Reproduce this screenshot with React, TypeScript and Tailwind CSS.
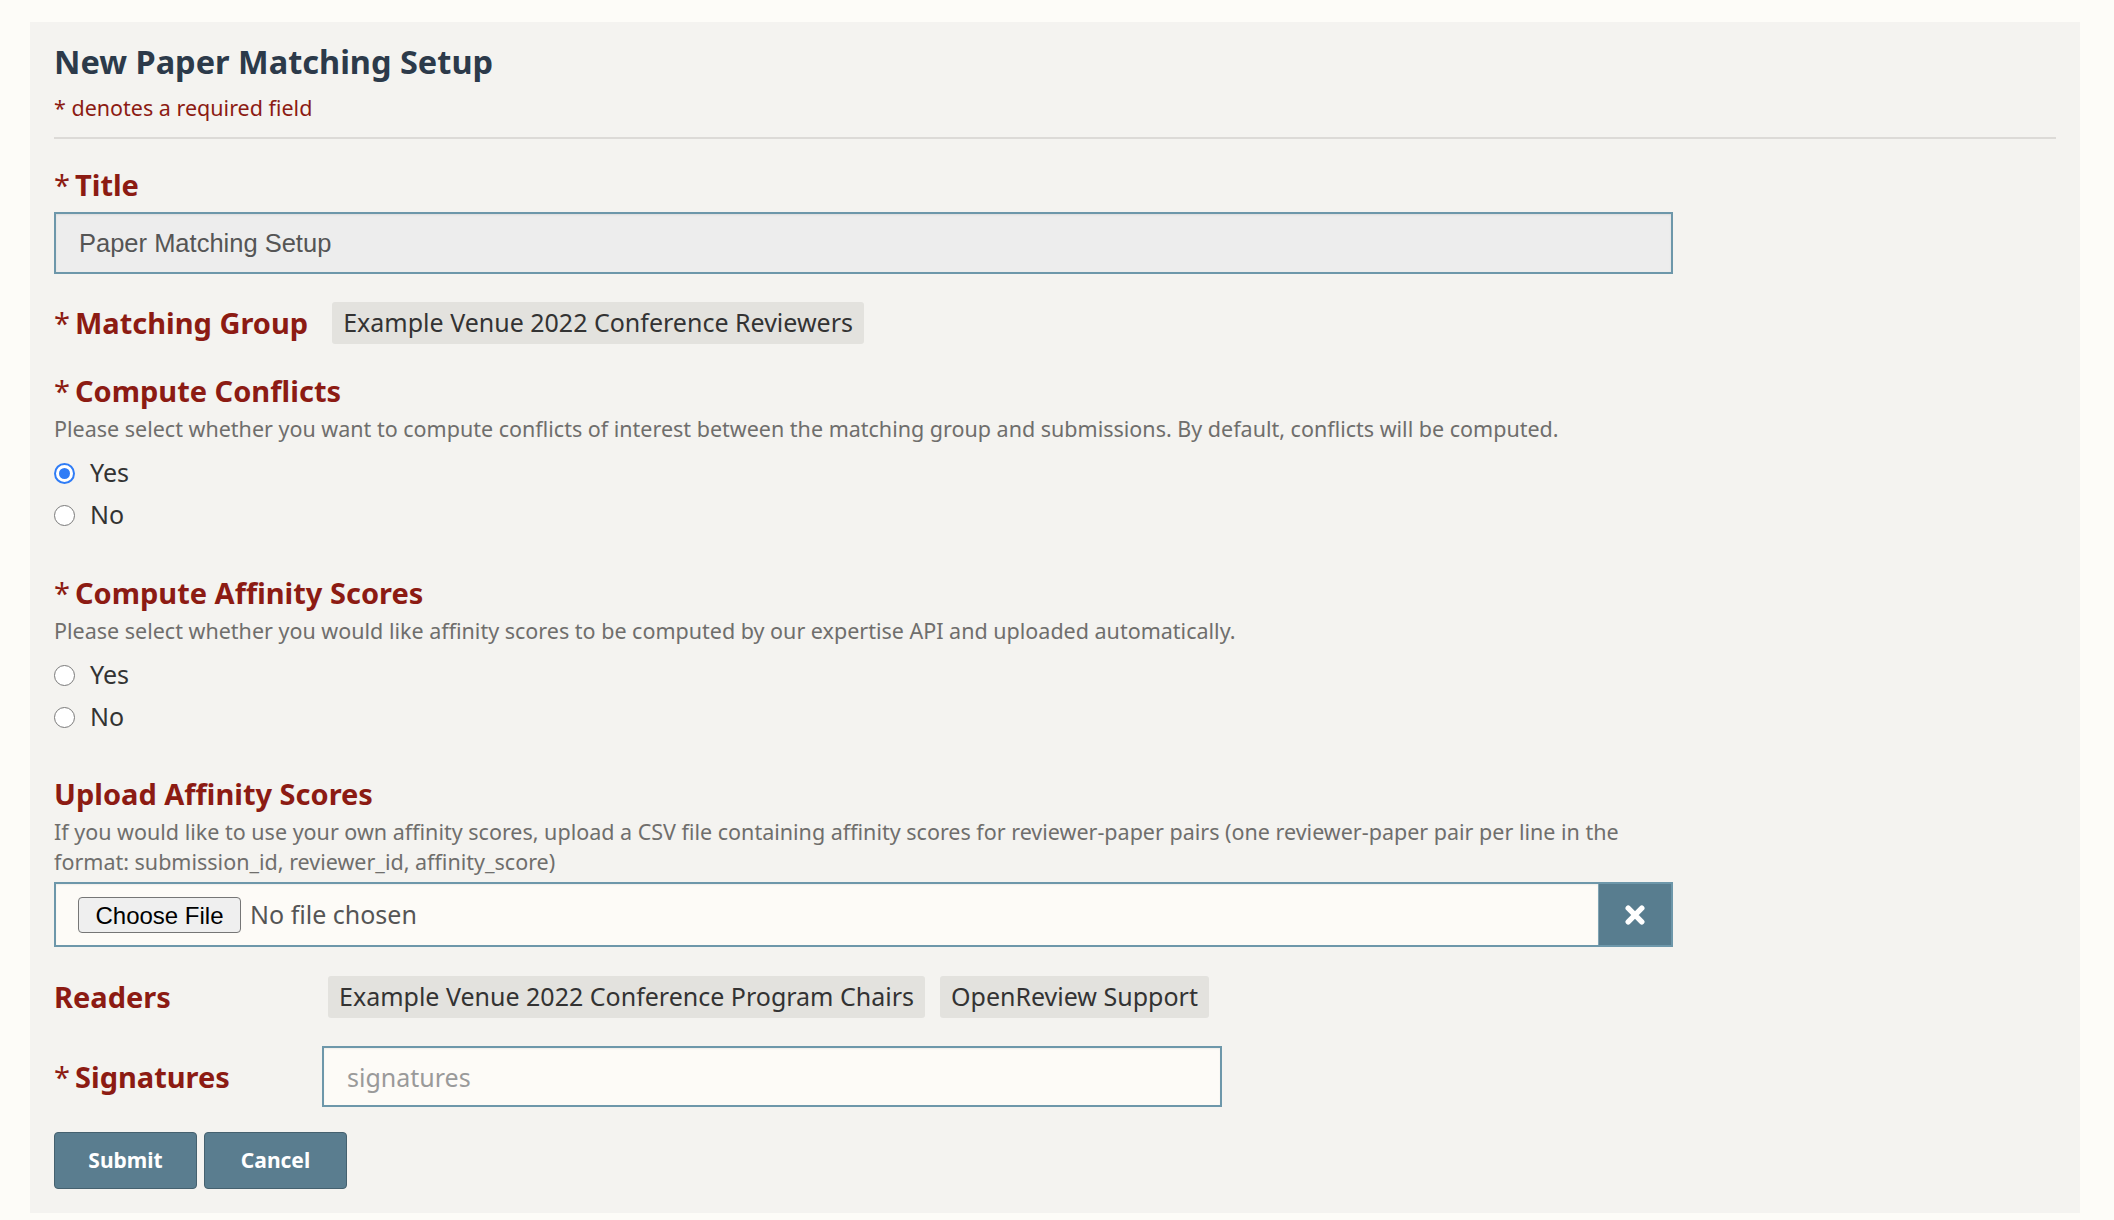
import React from 'react';

const labelCls = 'text-[29px] leading-[36px] font-bold text-[#8c1b13]';
const descCls = 'mt-[5px] text-[21.5px] leading-[30px] text-[#6f6e6c]';
const chipCls = 'h-[42px] px-[11px] flex items-center bg-[#e3e2de] rounded-[3px] text-[25px] text-[#333]';

const Req = () => <span className="font-normal mr-[5px]">*</span>;

const Radio = ({ label, checked }: { label: string; checked?: boolean }) => (
  <label className="h-[42px] flex items-center gap-[15px] text-[25px] text-[#333]">
    {checked ? (
      <span className="w-[21px] h-[21px] rounded-full border-[2px] border-[#2f7cf6] bg-white flex items-center justify-center">
        <span className="w-[11px] h-[11px] rounded-full bg-[#2f7cf6]" />
      </span>
    ) : (
      <span className="w-[21px] h-[21px] rounded-full border-[1.5px] border-[#7a7a7a] bg-white" />
    )}
    <span>{label}</span>
  </label>
);

export default function App() {
  return (
    <div className="min-h-screen bg-[#fdfcf8] pl-[30px] pr-[34px] pt-[22px] pb-[7px] font-['Noto_Sans',sans-serif]">
      <div className="bg-[#f4f3f0] px-6 pt-5 pb-6">
        {/* Header */}
        <h1 className="text-[32.5px] leading-[40px] font-bold text-[#2c3a4a]">New Paper Matching Setup</h1>
        <p className="mt-3 text-[21.5px] leading-[28px] text-[#8c1b13]">* denotes a required field</p>
        <hr className="mt-[15px] border-0 border-t-2 border-[#dcdad7]" />

        {/* Title */}
        <div className={`mt-[28px] ${labelCls}`}>
          <Req />Title
        </div>
        <input
          readOnly
          defaultValue="Paper Matching Setup"
          className="mt-[9px] block w-[1619px] h-[62px] border-2 border-[#6d97aa] bg-[#ededed] pl-[23px] text-[25.5px] text-[#555] font-['Liberation_Sans',Arial,sans-serif] outline-none shadow-[inset_0_1px_2px_rgba(0,0,0,0.08)]"
        />

        {/* Matching group */}
        <div className="mt-[28px] flex items-center gap-6">
          <div className={labelCls}>
            <Req />Matching Group
          </div>
          <span className={chipCls}>Example Venue 2022 Conference Reviewers</span>
        </div>

        {/* Compute conflicts */}
        <div className={`mt-[29px] ${labelCls}`}>
          <Req />Compute Conflicts
        </div>
        <p className={descCls}>
          Please select whether you want to compute conflicts of interest between the matching group and submissions. By default, conflicts will be computed.
        </p>
        <div className="mt-[8px]">
          <Radio label="Yes" checked />
          <Radio label="No" />
        </div>

        {/* Compute affinity */}
        <div className={`mt-[39px] ${labelCls}`}>
          <Req />Compute Affinity Scores
        </div>
        <p className={descCls}>
          Please select whether you would like affinity scores to be computed by our expertise API and uploaded automatically.
        </p>
        <div className="mt-[8px]">
          <Radio label="Yes" />
          <Radio label="No" />
        </div>

        {/* Upload affinity */}
        <div className={`mt-[38px] ${labelCls}`}>Upload Affinity Scores</div>
        <p className={`${descCls} w-[1640px] whitespace-nowrap`}>
          If you would like to use your own affinity scores, upload a CSV file containing affinity scores for reviewer-paper pairs (one reviewer-paper pair per line in the
          <br />
          format: submission_id, reviewer_id, affinity_score)
        </p>
        <div className="mt-[5px] w-[1619px] h-[65px] flex border-2 border-[#6d97aa]">
          <div className="flex-1 flex items-center pl-[22px] bg-[#fdfbf7] shadow-[inset_0_1px_2px_rgba(0,0,0,0.06)]">
            <button className="h-[36px] w-[163px] bg-[#efefef] border border-[#767676] rounded-[4px] text-[24px] text-black font-['Liberation_Sans',Arial,sans-serif]">
              Choose File
            </button>
            <span className="ml-[9px] text-[25px] text-[#555]">No file chosen</span>
          </div>
          <button className="w-[73px] bg-[#587d8f] border-l border-[#7fa3b3] flex items-center justify-center">
            <svg width="20" height="20" viewBox="0 0 20 20">
              <path d="M3.2 3.2 L16.8 16.8 M16.8 3.2 L3.2 16.8" stroke="#fff" strokeWidth="5.4" strokeLinecap="round" fill="none" />
            </svg>
          </button>
        </div>

        {/* Readers */}
        <div className="mt-[29px] flex items-center">
          <div className={`w-[274px] ${labelCls}`}>Readers</div>
          <div className="flex gap-[15px]">
            <span className={chipCls}>Example Venue 2022 Conference Program Chairs</span>
            <span className={chipCls}>OpenReview Support</span>
          </div>
        </div>

        {/* Signatures */}
        <div className="mt-[28px] flex items-center">
          <div className={`w-[268px] ${labelCls}`}>
            <Req />Signatures
          </div>
          <input
            placeholder="signatures"
            className="w-[900px] h-[61px] border-2 border-[#6d97aa] bg-[#fdfbf7] pl-[23px] text-[25px] text-[#333] placeholder:text-[#9a9a9a] outline-none shadow-[inset_0_1px_2px_rgba(0,0,0,0.06)]"
          />
        </div>

        {/* Actions */}
        <div className="mt-[25px] flex gap-[7px]">
          <button className="w-[143px] h-[57px] bg-[#5a7d8f] border border-[#45616f] rounded-[4px] text-white text-[21px] font-bold">
            Submit
          </button>
          <button className="w-[143px] h-[57px] bg-[#5a7d8f] border border-[#45616f] rounded-[4px] text-white text-[21px] font-bold">
            Cancel
          </button>
        </div>
      </div>
    </div>
  );
}
